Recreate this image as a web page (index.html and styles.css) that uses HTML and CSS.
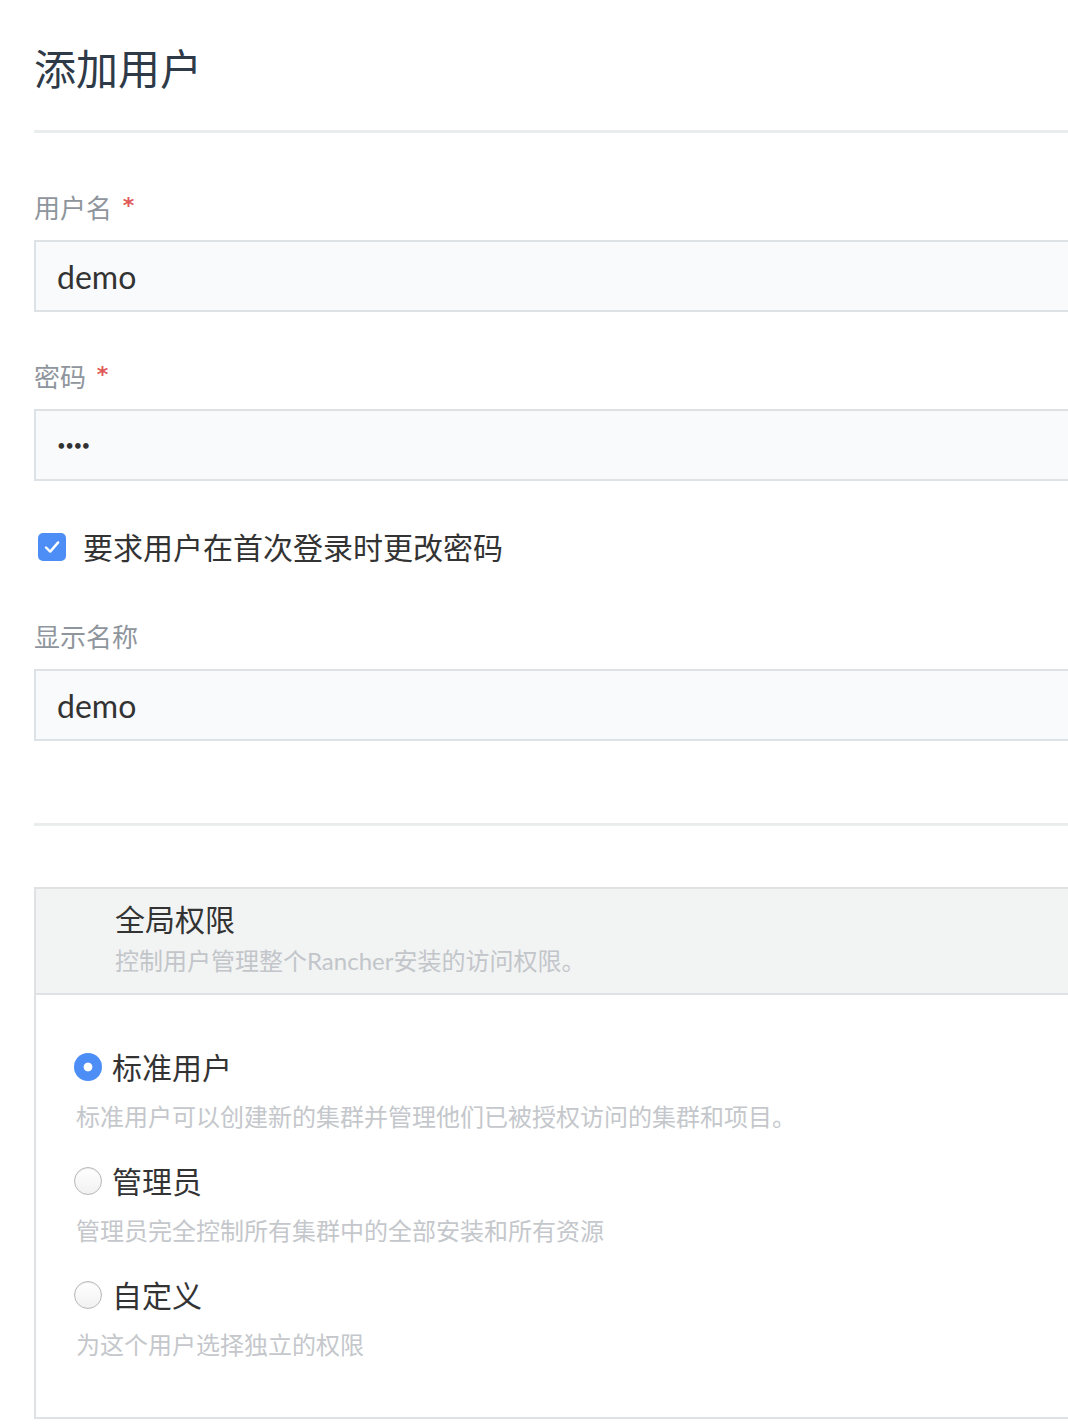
FILE: index.html
```html
<!DOCTYPE html>
<html lang="zh-CN">
<head>
<meta charset="utf-8">
<title>添加用户</title>
<link rel="stylesheet" href="styles.css">
</head>
<body>
<div class="page">
  <h1 class="title">添加用户</h1>
  <div class="rule"></div>

  <div class="field first">
    <label class="label">用户名 <span class="req">*</span></label>
    <input class="input" type="text" value="demo">
  </div>

  <div class="field">
    <label class="label">密码 <span class="req">*</span></label>
    <div class="input pw">••••</div>
  </div>

  <div class="check-row">
    <span class="checkbox">
      <svg viewBox="0 0 28 28" width="28" height="28"><rect x="0" y="0" width="28" height="28" rx="5" fill="#4d8ef6"/><path d="M8 14.5 L12.2 18.6 L20.2 9.4" fill="none" stroke="#fff" stroke-width="2.4" stroke-linecap="round" stroke-linejoin="round"/></svg>
    </span>
    <span class="check-label">要求用户在首次登录时更改密码</span>
  </div>

  <div class="field third">
    <label class="label">显示名称</label>
    <input class="input" type="text" value="demo">
  </div>

  <div class="rule second"></div>

  <section class="box">
    <header class="box-head">
      <div class="box-title">全局权限</div>
      <div class="box-sub">控制用户管理整个Rancher安装的访问权限。</div>
    </header>
    <div class="box-body">
      <div class="option">
        <div class="radio-row"><span class="radio checked"></span><span class="radio-label">标准用户</span></div>
        <div class="desc">标准用户可以创建新的集群并管理他们已被授权访问的集群和项目。</div>
      </div>
      <div class="option">
        <div class="radio-row"><span class="radio"></span><span class="radio-label">管理员</span></div>
        <div class="desc">管理员完全控制所有集群中的全部安装和所有资源</div>
      </div>
      <div class="option">
        <div class="radio-row"><span class="radio"></span><span class="radio-label">自定义</span></div>
        <div class="desc">为这个用户选择独立的权限</div>
      </div>
    </div>
  </section>
</div>
</body>
</html>
```

FILE: styles.css
```css
html, body {
  margin: 0;
  padding: 0;
  background: #ffffff;
  overflow: hidden;
}
body {
  font-family: Lato, "Noto Sans CJK SC", sans-serif;
  color: #333333;
}
.page {
  width: 1100px;
  padding-left: 34px;
}
.title {
  margin: 0;
  padding-top: 44px;
  font-size: 42px;
  line-height: 50px;
  font-weight: 400;
  color: #2f3a48;
}
.rule {
  margin-top: 36px;
  height: 3px;
  background: #eaeded;
}
.rule.second {
  margin-top: 82px;
}
.field {
  margin-top: 48px;
}
.field.first {
  margin-top: 58px;
}
.field.third {
  margin-top: 53px;
}
.label {
  display: block;
  font-size: 26px;
  line-height: 34px;
  color: #8f959c;
  margin-bottom: 15px;
}
.req {
  color: #e05a5a;
  font-family: "DejaVu Sans", sans-serif;
  font-weight: 700;
  font-size: 22px;
  line-height: 30px;
  margin-left: 4px;
  vertical-align: top;
}
.input {
  display: block;
  box-sizing: border-box;
  width: 100%;
  height: 72px;
  margin: 0;
  padding: 0 0 0 21px;
  border: 2px solid #dde2e6;
  background: #f9fafb;
  font-family: Lato, "Noto Sans CJK SC", sans-serif;
  font-size: 32px;
  color: #333333;
  outline: none;
}
.pw {
  display: flex;
  align-items: center;
  font-size: 15px;
  letter-spacing: -0.5px;
  padding-left: 21px;
}
.check-row {
  display: flex;
  align-items: center;
  height: 40px;
  margin-top: 46px;
  padding-left: 4px;
}
.checkbox {
  display: flex;
  width: 28px;
  height: 28px;
}
.check-label {
  margin-left: 17px;
  font-size: 30px;
  line-height: 40px;
  color: #333333;
}
.box {
  margin-top: 61px;
  border: 2px solid #dfe2e5;
  border-right: none;
}
.box-head {
  background: #f2f3f3;
  border-bottom: 2px solid #dfe2e5;
  padding: 10px 0 14px 79px;
}
.box-title {
  font-size: 30px;
  line-height: 40px;
  color: #333333;
}
.box-sub {
  font-size: 24px;
  line-height: 36px;
  margin-top: 4px;
  color: #c2c6ca;
}
.box-body {
  padding: 52px 0 54px 38px;
}
.option + .option {
  margin-top: 26px;
}
.radio-row {
  display: flex;
  align-items: center;
  height: 40px;
}
.radio {
  box-sizing: border-box;
  width: 28px;
  height: 28px;
  border-radius: 50%;
  border: 1px solid #b8b8b8;
  background: linear-gradient(#ffffff, #f1f1f1);
  box-shadow: inset 0 1px 1px rgba(0,0,0,0.08);
  flex: none;
}
.radio.checked {
  border: none;
  background: radial-gradient(circle, #ffffff 0 4px, #4d8ef6 4.8px);
  box-shadow: none;
}
.radio-label {
  margin-left: 10px;
  font-size: 30px;
  line-height: 40px;
  color: #333333;
}
.desc {
  margin-top: 12px;
  padding-left: 2px;
  font-size: 24px;
  line-height: 36px;
  color: #c4c7cb;
}
```
